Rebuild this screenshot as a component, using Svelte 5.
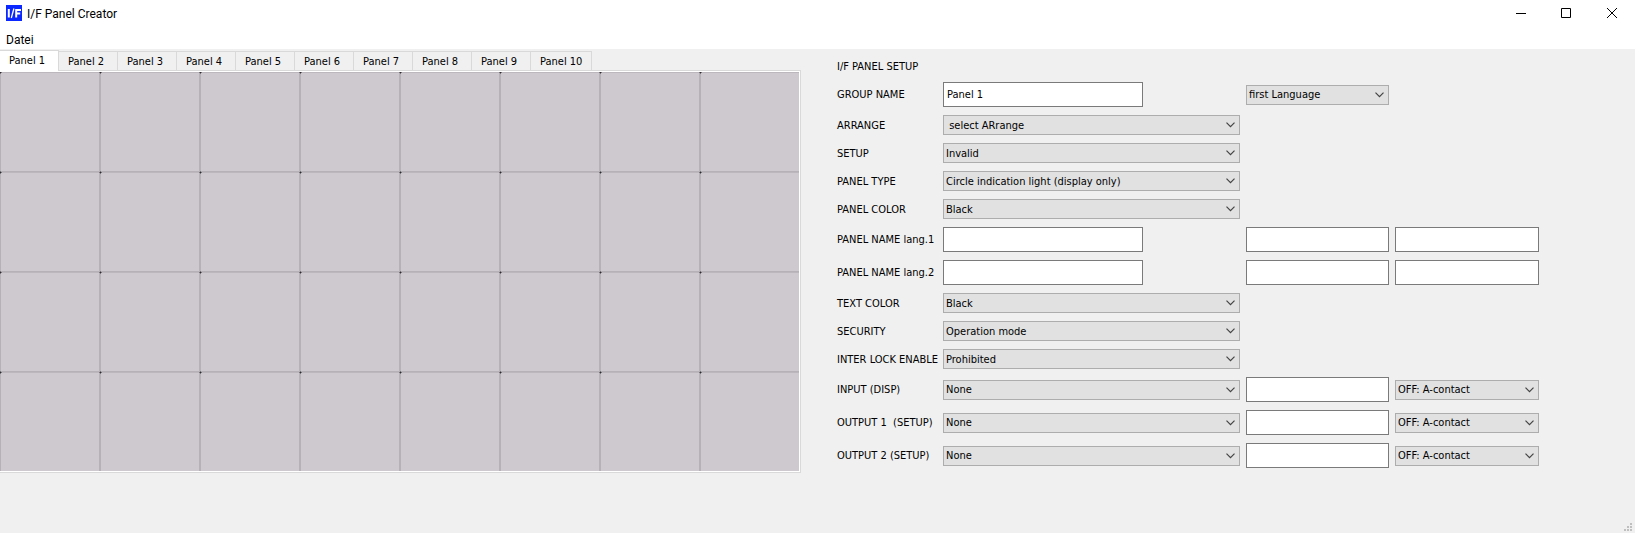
<script>
  const panels = Array.from({ length: 10 }, (_, i) => `Panel ${i + 1}`);
  let active = $state(0);

  const fields = [
    { id: 'group', label: 'GROUP NAME', text: 'Panel 1', extra: [{ type: 'select', value: 'first Language', name: 'Language' }] },
    { id: 'arrange', label: 'ARRANGE', select: '\u00a0select ARrange' },
    { id: 'setup', label: 'SETUP', select: 'Invalid' },
    { id: 'type', label: 'PANEL TYPE', select: 'Circle indication light (display only)' },
    { id: 'color', label: 'PANEL COLOR', select: 'Black' },
    { id: 'name1', label: 'PANEL NAME lang.1', text: '', extra: [{ type: 'text', name: 'Name line 2' }, { type: 'text', name: 'Name line 3' }] },
    { id: 'name2', label: 'PANEL NAME lang.2', text: '', extra: [{ type: 'text', name: 'Name line 2' }, { type: 'text', name: 'Name line 3' }] },
    { id: 'textcolor', label: 'TEXT COLOR', select: 'Black' },
    { id: 'security', label: 'SECURITY', select: 'Operation mode' },
    { id: 'lock', label: 'INTER LOCK ENABLE', select: 'Prohibited' },
    { id: 'input', label: 'INPUT (DISP)', select: 'None', extra: [{ type: 'text', name: 'Address' }, { type: 'select', value: 'OFF: A-contact', name: 'Contact' }] },
    { id: 'output1', label: 'OUTPUT 1\u00a0 (SETUP)', select: 'None', extra: [{ type: 'text', name: 'Address' }, { type: 'select', value: 'OFF: A-contact', name: 'Contact' }] },
    { id: 'output2', label: 'OUTPUT 2 (SETUP)', select: 'None', extra: [{ type: 'text', name: 'Address' }, { type: 'select', value: 'OFF: A-contact', name: 'Contact' }] }
  ];
</script>

<div class="window">
  <header class="titlebar">
    <svg class="logo" width="16" height="16" viewBox="0 0 16 16" aria-hidden="true">
      <rect width="16" height="16" fill="#0a28ff" />
      <path d="M2.8 4v8.5M10.2 12.5V4.9h4.8M10.2 8.6h4" fill="none" stroke="#fff" stroke-width="2" />
      <path d="M7.9 3.5L5.3 13" stroke="#fff" stroke-width="1.3" />
    </svg>
    <h1>I/F Panel Creator</h1>
    <div class="controls">
      <button aria-label="Minimize"><svg width="12" height="10"><path d="M2 5.5h10" /></svg></button>
      <button aria-label="Maximize"><svg width="10" height="10"><path d="M.5 .5h9v9h-9z" /></svg></button>
      <button aria-label="Close"><svg width="10" height="10"><path d="M0 0l10 10M10 0L0 10" /></svg></button>
    </div>
  </header>
  <nav class="menu"><button>Datei</button></nav>

  <main>
    <section class="editor">
      <div class="tabs" role="tablist">
        {#each panels as panel, i}
          <button role="tab" aria-selected={active === i} class:active={active === i} onclick={() => (active = i)}>{panel}</button>
        {/each}
      </div>
      <div class="pane">
        <svg class="grid" width="799" height="399" aria-hidden="true">
          <defs>
            <pattern id="cell" width="100" height="100" patternUnits="userSpaceOnUse" shape-rendering="crispEdges">
              <rect width="100" height="100" fill="#cec9cf" />
              <path d="M0 0h1v100H0zM99 0h1v100h-1zM0 99h100v1H0z" fill="#b5b1b7" />
              <path d="M0 0h100v1H0z" fill="#bbb7bc" />
              <path d="M99 0h3v1h-3zM0 0h2v1H0zM0 99h1v1H0zM0 1h1v1H0z" fill="#77737a" />
              <path d="M0 0h1v1H0z" fill="#2e2b31" />
            </pattern>
          </defs>
          <rect width="799" height="399" fill="url(#cell)" />
        </svg>
      </div>
    </section>

    <form class="setup" onsubmit={(e) => e.preventDefault()}>
      <h2>I/F PANEL SETUP</h2>
      {#each fields as field}
        <div class="row">
          <label for={field.id}>{field.label}</label>
          {#if field.select}
            <select id={field.id}><option>{field.select}</option></select>
          {:else}
            <input class="short" id={field.id} type="text" value={field.text} />
          {/if}
          {#each field.extra ?? [] as item}
            {#if item.type === 'select'}
              <select aria-label={item.name}><option>{item.value}</option></select>
            {:else}
              <input type="text" aria-label={item.name} />
            {/if}
          {/each}
        </div>
      {/each}
    </form>
  </main>

  <footer>
    <svg width="8" height="8" fill="#bfbfbf" aria-hidden="true">
      <path d="M6 0h2v2H6zM3 3h2v2H3zM6 3h2v2H6zM0 6h2v2H0zM3 6h2v2H3zM6 6h2v2H6z" />
    </svg>
  </footer>
</div>

<style>
  :global(body) {
    margin: 0;
  }
  .window {
    box-sizing: border-box;
    min-height: 100vh;
    display: flex;
    flex-direction: column;
    background: #f0f0f0;
    color: #000;
    font: 11px/15px "DejaVu Sans Condensed", "DejaVu Sans", sans-serif;
  }
  button, input, select {
    box-sizing: border-box;
    margin: 0;
    font: inherit;
    color: inherit;
    border-radius: 0;
  }
  button {
    border: 0;
    padding: 0;
    background: none;
  }
  .titlebar {
    display: flex;
    align-items: center;
    gap: 5px;
    height: 26px;
    padding-left: 6px;
    background: #fff;
  }
  h1, .menu {
    font: 12px/16px Roboto, "Open Sans", sans-serif;
  }
  h1 {
    margin: 0;
    padding-top: 1px;
  }
  .controls {
    display: flex;
    align-self: stretch;
    margin-left: auto;
  }
  .controls button {
    width: 46px;
    display: flex;
    align-items: center;
    justify-content: center;
  }
  .controls svg {
    fill: none;
    stroke: #000;
  }
  .menu {
    display: flex;
    align-items: center;
    height: 19px;
    padding: 4px 6px 0;
    background: #fff;
  }
  main {
    display: flex;
    gap: 36px;
    padding-right: 96px;
  }
  .editor {
    flex: none;
    padding-top: 1px;
  }
  .tabs {
    display: flex;
    align-items: flex-end;
    height: 20px;
  }
  .tabs button {
    min-width: 59px;
    height: 19px;
    padding: 1px 9px 0;
    border: solid #d9d9d9;
    border-width: 1px 1px 0 0;
    text-align: left;
  }
  .tabs .active {
    height: 21px;
    padding-bottom: 2px;
    margin-bottom: -1px;
    background: #fff;
    position: relative;
  }
  .pane {
    border: solid #d9d9d9;
    border-width: 1px 1px 1px 0;
    padding: 1px 1px 1px 0;
    background: #fff;
  }
  .grid {
    display: block;
  }
  .setup {
    flex: 1;
    display: flex;
    flex-direction: column;
    gap: 8px;
    padding-top: 10px;
  }
  h2 {
    margin: 0;
    font: inherit;
  }
  .row {
    display: grid;
    grid-template-columns: 100px 297fr 143fr 144fr;
    column-gap: 6px;
    align-items: center;
  }
  label {
    white-space: nowrap;
  }
  input {
    width: 100%;
    min-width: 0;
    height: 25px;
    padding: 0 3px;
    border: 1px solid #7a7a7a;
    background: #fff;
  }
  .short {
    width: 200px;
  }
  select {
    appearance: none;
    width: 100%;
    min-width: 0;
    height: 20px;
    padding: 0 18px 0 2px;
    border: 1px solid #adadad;
    background: #e1e1e1 url("data:image/svg+xml,%3Csvg xmlns='http://www.w3.org/2000/svg' width='9' height='6'%3E%3Cpath d='M.5 .7l4 4 4-4' fill='none' stroke='%23444' stroke-width='1.2'/%3E%3C/svg%3E") no-repeat right 4px center;
  }
  footer {
    display: flex;
    justify-content: flex-end;
    margin-top: auto;
    padding: 0 3px 2px;
  }
  footer svg {
    display: block;
  }
</style>
